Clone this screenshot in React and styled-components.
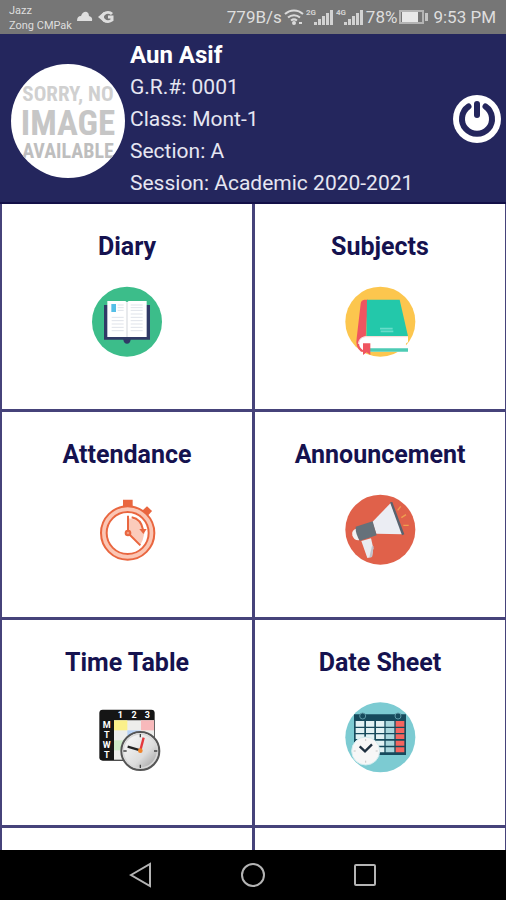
import React from "react";
import styled, { createGlobalStyle } from "styled-components";

const tiles = [
  { title: "Diary", Icon: DiaryIcon },
  { title: "Subjects", Icon: SubjectsIcon },
  { title: "Attendance", Icon: AttendanceIcon },
  { title: "Announcement", Icon: AnnouncementIcon },
  { title: "Time Table", Icon: TimeTableIcon },
  { title: "Date Sheet", Icon: DateSheetIcon },
];

const App = () => {
  return (
    <Screen>
      <GlobalStyle />
      <StatusBar>
        <Carriers>
          <span>Jazz</span>
          <span>Zong CMPak</span>
        </Carriers>
        <NoticeIcons />
        <StatusRight>
          <span>779B/s</span>
          <WifiIcon />
          <SignalIcon label="2G" />
          <SignalIcon label="4G" />
          <span>78%</span>
          <BatteryIcon />
          <Clock>9:53 PM</Clock>
        </StatusRight>
      </StatusBar>
      <Header>
        <Avatar viewBox="0 0 114 114" role="img" aria-label="No image available">
          <defs>
            <clipPath id="round">
              <circle cx="57" cy="57" r="57" />
            </clipPath>
          </defs>
          <circle cx="57" cy="57" r="57" fill="#fff" />
          <g clipPath="url(#round)" textAnchor="middle" fontWeight="700">
            <text x="57" y="37" fontSize="21" fill="#d0d0d0">SORRY, NO</text>
            <text x="57" y="71" fontSize="35" fill="#c6c6c6">IMAGE</text>
            <text x="57" y="94" fontSize="20" fill="#bebebe">AVAILABLE</text>
          </g>
        </Avatar>
        <Student>
          <Name>Aun Asif</Name>
          <Detail>G.R.#: 0001</Detail>
          <Detail>Class: Mont-1</Detail>
          <Detail>Section: A</Detail>
          <Detail>Session: Academic 2020-2021</Detail>
        </Student>
        <PowerButton aria-label="Log out">
          <svg viewBox="0 0 48 48" width="48" height="48" fill="none">
            <circle cx="24" cy="24" r="24" fill="#fff" />
            <path d="M15.500 11.500a15 15 0 1 0 17 0" stroke="#24265d" strokeWidth="6" strokeLinecap="round" />
            <path d="M24 9v11" stroke="#24265d" strokeWidth="6" strokeLinecap="round" />
          </svg>
        </PowerButton>
      </Header>
      <Grid>
        {tiles.map(({ title, Icon }) => (
          <Tile key={title}>
            <TileTitle>{title}</TileTitle>
            <Icon />
          </Tile>
        ))}
        <EmptyTile />
        <EmptyTile />
      </Grid>
      <NavBar>
        <NavButton aria-label="Back">
          <svg width="24" height="28" viewBox="0 0 24 28">
            <path d="M2 14L21 3v22z" />
          </svg>
        </NavButton>
        <NavButton aria-label="Home">
          <svg width="28" height="28" viewBox="0 0 28 28">
            <circle cx="14" cy="14" r="11" />
          </svg>
        </NavButton>
        <NavButton aria-label="Recent apps">
          <svg width="24" height="28" viewBox="0 0 24 28">
            <rect x="2" y="4" width="20" height="20" rx="1" />
          </svg>
        </NavButton>
      </NavBar>
    </Screen>
  );
};

function NoticeIcons() {
  return (
    <svg width="40" height="16" viewBox="0 0 40 16" fill="#dedede">
      <path d="M1 12q0-5 4-5 2-5 6-4 2 1 2 4 4 1 3 5z" />
      <path
        d="M36 5a5.500 4.500 0 1 0 0 6V8h-4"
        fill="none"
        stroke="#dedede"
        strokeWidth="3"
      />
      <path d="M22 8l6-5v10z" />
    </svg>
  );
}

function WifiIcon() {
  return (
    <svg width="20" height="18" viewBox="0 0 20 18" fill="none" stroke="#dadada" strokeWidth="2">
      <path d="M1 6a13 13 0 0 1 18 0M4 9.500a9 9 0 0 1 12 0M7 12.500a5 5 0 0 1 6 0" />
      <circle cx="10" cy="15" r="1" fill="#dadada" />
      <path d="M15 15h3" />
    </svg>
  );
}

function SignalIcon({ label }) {
  return (
    <svg width="28" height="20" viewBox="0 0 28 20" fill="#d2d2d2">
      <text x="0" y="8" fontSize="8" fontWeight="700">{label}</text>
      <path d="M8 18v-3h3v3zM12 18v-6h3v6zM16 18v-9h3v9zM20 18V6h3v12zM24 18V3h3v15z" />
    </svg>
  );
}

function BatteryIcon() {
  return (
    <svg width="30" height="16" viewBox="0 0 30 16">
      <rect x="1" y="2" width="23" height="12" fill="none" stroke="#b4b4b4" strokeWidth="2" />
      <path d="M3 3h16v10H3z" fill="#e8e8e8" />
      <path d="M26 4h3v8h-3z" fill="#c4c4c4" />
    </svg>
  );
}

function DiaryIcon() {
  return (
    <Art viewBox="0 0 285 285">
      <circle cx="141" cy="140" r="105" fill="#3cbd8a" />
      <path d="M72 90H210V194H152Q150 206 141 206T130 194H72z" fill="#303a66" />
      <path d="M82 78H136L141 82L146 78H200V186H82z" fill="#fff" />
      <path d="M141 82V186" stroke="#e4e6ea" strokeWidth="5" />
      <path d="M94 87h14v24H94z" fill="#55bfe7" />
      <path
        d="M113 90h18M113 98h18M113 106h18M95 127h36M95 137h36M95 147h36M95 157h36M95 167h36M152 90h36M152 98h36M152 106h36M152 117h36M152 127h36M152 137h36M152 147h36M152 157h36M152 167h36"
        stroke="#dfe3ea"
        strokeWidth="3"
      />
    </Art>
  );
}

function SubjectsIcon() {
  return (
    <Art viewBox="0 0 285 285">
      <circle cx="142" cy="140" r="105" fill="#fcc64e" />
      <path d="M105 74H94Q84 75 83 86L71 190Q66 216 84 230H98V190z" fill="#ef5560" />
      <path d="M102 74H200L225 184H100z" fill="#23c8aa" />
      <path d="M225 184H98Q78 186 78 204T98 230H225V219Q212 206 225 202z" fill="#fff" />
      <path d="M225 185H98Q77 188 76 207" fill="none" stroke="#f8d9d8" strokeWidth="3" />
      <path d="M111 220H225V230H111z" fill="#4dcbb4" />
      <path d="M90 205H112V240L101 232L90 240z" fill="#ef5560" />
      <path d="M141 161h38M143 169h38" stroke="#67dcc9" strokeWidth="5" />
    </Art>
  );
}

function AttendanceIcon() {
  return (
    <Art viewBox="0 -6 285 285" fill="none" stroke="#e9663f" strokeWidth="6">
      <path d="M132 47h23v18h-23z" fill="#e9663f" />
      <path d="M191 77l10-9 11 10-9 10z" fill="#e9663f" />
      <circle cx="143" cy="144" r="72" stroke="#fbc6b4" strokeWidth="14" />
      <circle cx="143" cy="144" r="80" />
      <circle cx="143" cy="144" r="63" />
      <path d="M144 144V100Q190 105 193 145Q190 165 181 180z" fill="#fbcbbb" stroke="none" />
      <path d="M144 92v52l37 37" />
      <path d="M155 97Q184 103 189 134" />
      <path d="M178 132h22l-10 15z" fill="#e9663f" stroke="none" />
      <circle cx="144" cy="144" r="7" fill="#f19a7f" />
    </Art>
  );
}

function AnnouncementIcon() {
  return (
    <Art viewBox="0 -6 285 285">
      <circle cx="142" cy="134" r="105" fill="#e0614a" />
      <path d="M74 130Q54 135 58 151T78 166z" fill="#f2f2f4" />
      <path d="M85 168L114 160L121 190L117 216L103 219z" fill="#e9ebf0" />
      <path d="M117 183L122 184L117 216L109 217z" fill="#bfc3cb" />
      <path d="M118 111L173 54L209 148L130 146z" fill="#ebedf3" />
      <path d="M68 125L119 109L131 151L81 167Q67 148 68 125z" fill="#66717a" />
      <path d="M171 52L178 51L214 148L207 151z" fill="#58626e" />
      <path d="M194 76l9-12M205 98l14-9M211 121h16" stroke="#ef9f4f" strokeWidth="4" />
    </Art>
  );
}

function TimeTableIcon() {
  return (
    <Art viewBox="0 -12 285 285">
      <defs>
        <linearGradient id="clockFace" x1="0" y1="0" x2="1" y2="1">
          <stop offset="0" stopColor="#ffffff" />
          <stop offset="0.6" stopColor="#dcdcdc" />
          <stop offset="1" stopColor="#8e8e8e" />
        </linearGradient>
      </defs>
      <rect x="58" y="44" width="166" height="153" rx="10" fill="#151515" />
      <path d="M102 76H222V188Q222 194 216 194H102z" fill="#ededeb" />
      <path d="M102 76h40v30h-40z" fill="#fbf08a" />
      <path d="M183 76h39v30h-39z" fill="#f8b9bb" />
      <path d="M142 106h40v30h-40z" fill="#b8d2f6" />
      <path d="M102 136h34v30h-34z" fill="#cdeac8" />
      <g fill="#fff" fontSize="27" fontWeight="700" textAnchor="middle">
        <text x="121" y="70">1</text>
        <text x="162" y="70">2</text>
        <text x="202" y="70">3</text>
        <text x="80" y="99">M</text>
        <text x="80" y="130">T</text>
        <text x="80" y="160">W</text>
        <text x="80" y="189">T</text>
      </g>
      <circle cx="181" cy="168" r="57" fill="url(#clockFace)" stroke="#555" strokeWidth="6" />
      <circle cx="181" cy="168" r="51" fill="none" stroke="#d8d8d8" strokeWidth="4" />
      <path d="M181 117v10M181 209v10M130 168h10M222 168h10" stroke="#444" strokeWidth="4" />
      <path d="M181 166L143 155" stroke="#222" strokeWidth="7" />
      <path d="M181 166L191 128" stroke="#e4383d" strokeWidth="7" />
      <circle cx="181" cy="167" r="7" fill="#f08228" />
    </Art>
  );
}

function DateSheetIcon() {
  return (
    <Art viewBox="0 -12 285 285">
      <circle cx="142" cy="127" r="105" fill="#7ccbd2" />
      <path d="M63 58H219V180H63z" fill="#164a5c" />
      <path
        d="M68 78h26v17H68zM99 78h25v17H99zM129 78h25v17h-25zM68 99h26v15H68zM99 99h25v15H99zM129 99h25v15h-25zM68 118h26v14H68zM99 118h25v14H99zM129 118h25v14h-25zM129 137h25v15h-25zM129 157h25v15h-25z"
        fill="#e2f2f4"
      />
      <path
        d="M158 78h26v17h-26zM158 99h26v15h-26zM158 118h26v14h-26zM158 137h26v15h-26zM158 157h26v15h-26z"
        fill="#a9d7dd"
      />
      <path
        d="M188 78h26v17h-26zM188 99h26v15h-26zM188 118h26v14h-26zM188 137h26v15h-26zM188 157h26v15h-26z"
        fill="#f5655f"
      />
      <g fill="#164a5c" stroke="#5d98a5" strokeWidth="3">
        <circle cx="89" cy="63" r="9" />
        <circle cx="195" cy="63" r="9" />
      </g>
      <circle cx="98" cy="168" r="42" fill="#f7f7f7" stroke="#d3ecef" strokeWidth="3" />
      <path d="M80 154L96 169L117 148" fill="none" stroke="#1e3040" strokeWidth="7" />
      <path d="M98 132v6M98 197v6M62 168h6M128 168h6" stroke="#c6c6c6" strokeWidth="3" />
    </Art>
  );
}

const GlobalStyle = createGlobalStyle`
  * {
    box-sizing: border-box;
  }

  body {
    margin: 0;
    font-family: Roboto, "Liberation Sans", sans-serif;
  }

  button {
    border: 0;
    padding: 0;
    background: none;
    font: inherit;
    cursor: pointer;
  }
`;

const Screen = styled.div`
  display: flex;
  flex-direction: column;
  height: 100vh;
  background: #fff;
`;

const StatusBar = styled.div`
  display: flex;
  align-items: center;
  height: 34px;
  flex-shrink: 0;
  padding: 0 10px 0 9px;
  background: #767676;
  color: #dedede;
`;

const Carriers = styled.div`
  display: flex;
  flex-direction: column;
  font-size: 11px;
  line-height: 15px;
  margin: 2px 4px 0 0;
`;

const StatusRight = styled.div`
  display: flex;
  align-items: center;
  gap: 2px;
  margin-left: auto;
  font-size: 17px;
`;

const Clock = styled.span`
  margin-left: 2px;
`;

const Header = styled.header`
  display: flex;
  align-items: center;
  flex-shrink: 0;
  height: 170px;
  padding: 2px 5px 0 11px;
  background: #24265d;
  border-bottom: 2px solid #131048;
  color: #fff;
`;

const Avatar = styled.svg`
  width: 114px;
  height: 114px;
  flex-shrink: 0;
  margin-top: 4px;
  font-family: "Roboto Condensed", "Liberation Sans Narrow", "Open Sans", sans-serif;
`;

const Student = styled.div`
  flex: 1;
  margin-left: 5px;
`;

const Name = styled.h1`
  margin: 0;
  font-size: 24px;
  font-weight: 700;
  line-height: 32px;
`;

const Detail = styled.p`
  margin: 0;
  font-size: 21px;
  line-height: 32px;
  color: #e6e6f2;
`;

const PowerButton = styled.button`
  display: flex;
`;

const Grid = styled.main`
  flex: 1;
  min-height: 0;
  overflow: hidden;
  display: grid;
  grid-template-columns: 1fr 1fr;
  grid-auto-rows: 205px;
  gap: 3px;
  padding: 0 1px 0 2px;
  background: #46437a;
`;

const Tile = styled.button`
  display: flex;
  flex-direction: column;
  align-items: center;
  gap: 13px;
  padding-top: 28px;
  background: #fff;
  color: #15124f;
`;

const EmptyTile = styled.div`
  background: #fff;
`;

const TileTitle = styled.span`
  font-size: 25px;
  font-weight: 700;
  line-height: 30px;
`;

const Art = styled.svg`
  width: 95px;
  height: 95px;
`;

const NavBar = styled.nav`
  display: flex;
  align-items: center;
  justify-content: center;
  gap: 86px;
  height: 50px;
  flex-shrink: 0;
  background: #000;
`;

const NavButton = styled.button`
  display: flex;
  fill: none;
  stroke: #b4b4b4;
  stroke-width: 2px;
`;

export default App;
